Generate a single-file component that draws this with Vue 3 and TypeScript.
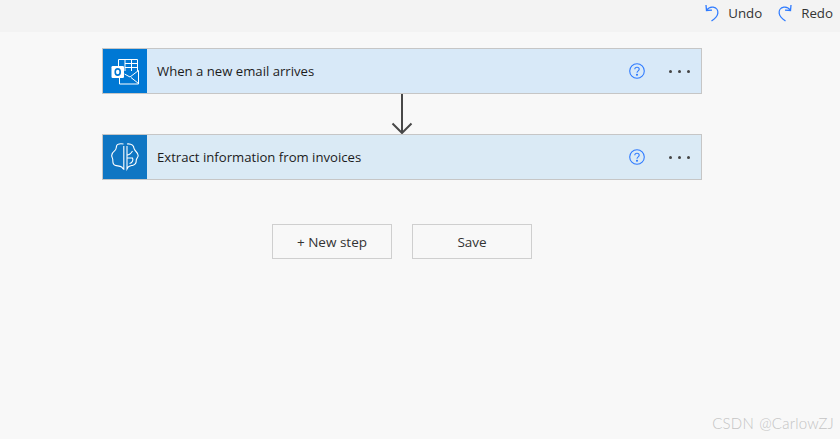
<script setup lang="ts">
interface Step {
  id: number;
  title: string;
  kind: "outlook" | "brain";
}

const steps: Step[] = [
  { id: 1, title: "When a new email arrives", kind: "outlook" },
  { id: 2, title: "Extract information from invoices", kind: "brain" },
];
</script>

<template>
  <div class="page">
    <header class="topbar">
      <button class="cmd">
        <svg class="cmd-icon" viewBox="0 0 14 18" fill="none" stroke="#2f7bff" stroke-width="1.3">
          <path d="M1 1 L1.5 6.5 L7 6.2" />
          <path d="M1.5 6.4 C3.5 3.5 6 2.8 8.2 3.2 C11.5 3.8 13.3 6.5 12.8 9.5 C12.3 12.5 9.5 15 6.5 17" />
        </svg>
        <span>Undo</span>
      </button>
      <button class="cmd">
        <svg class="cmd-icon" viewBox="0 0 14 18" fill="none" stroke="#2f7bff" stroke-width="1.3">
          <path d="M13 1 L12.5 6.5 L7 6.2" />
          <path d="M12.5 6.4 C10.5 3.5 8 2.8 5.8 3.2 C2.5 3.8 0.7 6.5 1.2 9.5 C1.7 12.5 4.5 15 7.5 17" />
        </svg>
        <span>Redo</span>
      </button>
    </header>

    <main class="canvas">
      <template v-for="(step, i) in steps" :key="step.id">
        <div v-if="i > 0" class="connector">
          <svg width="22" height="40" viewBox="0 0 22 40" fill="none" stroke="#484848" stroke-width="2">
            <path d="M11 0 V39" />
            <path d="M1.5 29.5 L11 39 L20.5 29.5" />
          </svg>
        </div>
        <div class="card" :class="step.kind">
          <div class="card-icon">
            <svg v-if="step.kind === 'outlook'" width="29" height="27" viewBox="0 0 29 27" fill="none" stroke="#fff" stroke-width="1">
              <path d="M7.5 8 V1.5 H26.5 V13" />
              <path d="M14 1.5 V13 M20.5 1.5 V13 M14 5.5 H26.5 M14 9.5 H26.5" />
              <path d="M8.5 20 V26 H27.5 V12.5 L19 19 L13.5 16" />
              <path d="M27.5 25.5 L20 19.5" />
              <rect x="0.5" y="8" width="12.5" height="12" rx="1.2" fill="#fff" stroke="none" />
              <ellipse cx="6.7" cy="14" rx="2.5" ry="3.1" fill="none" stroke="#0078d4" stroke-width="1.6" />
            </svg>
            <svg v-else width="28" height="28" viewBox="0 0 28 28" fill="none" stroke="#fff" stroke-width="1.1">
              <path d="M12.5 1 C9.5 0.6 6 1 5.6 3 C5 5 5.4 6.3 4 7.4 C2 9 0.6 10.6 0.7 12.6 C0.8 14.6 2 15.5 1.8 17.4 C1.8 20 2.6 21.8 4.4 22.4 C6.5 23 9 23 10.6 24 C11.4 24.8 12 25.8 12.8 26.2 V3" />
              <path d="M16 1 C18 0.6 21.5 1.2 22.5 3.5 C23 5.5 23 6.6 25 8.5 C26.7 10.2 27.6 11.5 27 13.4 C26.4 15.3 25 15.6 25.2 18 C25.2 20 24 21.6 22 22.2 C20 22.8 18.2 23 17 24.2 L16 26 V3" />
              <path d="M16 12 C18 12 20 10.5 21.5 8" />
              <path d="M16 15 H21.5 C22.5 17 21.5 20 18.5 20.5" />
            </svg>
          </div>
          <span class="card-title">{{ step.title }}</span>
          <svg class="help" width="16" height="16" viewBox="0 0 16 16" fill="none" stroke="#2f7bff" stroke-width="1.1">
            <circle cx="8" cy="8" r="7.3" />
            <path d="M5.8 6.2 C5.8 3.6 10.2 3.6 10.2 6.2 C10.2 7.9 8 7.8 8 9.8" />
            <circle cx="8" cy="11.8" r="0.5" fill="#2f7bff" />
          </svg>
          <div class="dots"><i></i><i></i><i></i></div>
        </div>
      </template>

      <div class="actions">
        <button class="btn">+ New step</button>
        <button class="btn">Save</button>
      </div>
    </main>

    <div class="watermark">CSDN @CarlowZJ</div>
  </div>
</template>

<style>
html,
body {
  margin: 0;
  background: #f8f8f8;
}
</style>

<style scoped>
.page {
  position: relative;
  width: 840px;
  height: 439px;
  overflow: hidden;
  background: #f8f8f8;
  font-family: "Open Sans", "Noto Sans", sans-serif;
  color: #222;
}

.topbar {
  height: 32px;
  box-sizing: border-box;
  background: #f3f3f3;
  display: flex;
  justify-content: flex-end;
  align-items: flex-start;
  gap: 16px;
  padding: 4px 7px 0 0;
}

.cmd {
  display: flex;
  align-items: center;
  gap: 9px;
  padding: 0;
  border: 0;
  background: none;
  font: inherit;
  font-size: 13.3px;
  line-height: 18px;
  color: #333;
}

.cmd-icon {
  width: 14px;
  height: 18px;
}

.canvas {
  display: flex;
  flex-direction: column;
  width: 600px;
  margin-left: 102px;
  padding-top: 16px;
}

.connector {
  height: 40px;
  display: flex;
  justify-content: center;
}

.card {
  height: 46px;
  box-sizing: border-box;
  display: flex;
  align-items: center;
  border: 1px solid #c6c6c6;
  background: #d8e9f8;
}

.card.brain {
  background: #daeaf5;
}

.card-icon {
  width: 44px;
  height: 44px;
  flex: none;
  display: flex;
  align-items: center;
  justify-content: center;
  background: #0078d4;
}

.brain .card-icon {
  background: #0f76c3;
}

.card-title {
  flex: 1;
  margin-left: 10px;
  font-size: 13.15px;
  color: #1c1c1c;
}

.help {
  margin-right: 24px;
}

.dots {
  display: flex;
  gap: 6px;
  margin-right: 11px;
}

.dots i {
  width: 3px;
  height: 3px;
  border-radius: 50%;
  background: #444;
}

.actions {
  display: flex;
  justify-content: center;
  gap: 20px;
  margin-top: 44px;
}

.btn {
  width: 120px;
  height: 35px;
  padding: 0;
  border: 1px solid #cfcfcf;
  background: #f8f8f8;
  font: inherit;
  font-size: 13.5px;
  color: #333;
}

.watermark {
  position: absolute;
  right: 6px;
  bottom: 7px;
  font-family: "Lato", sans-serif;
  font-size: 15px;
  font-weight: 300;
  letter-spacing: 0.2px;
  word-spacing: 1px;
  color: #c4c4c4;
}
</style>
